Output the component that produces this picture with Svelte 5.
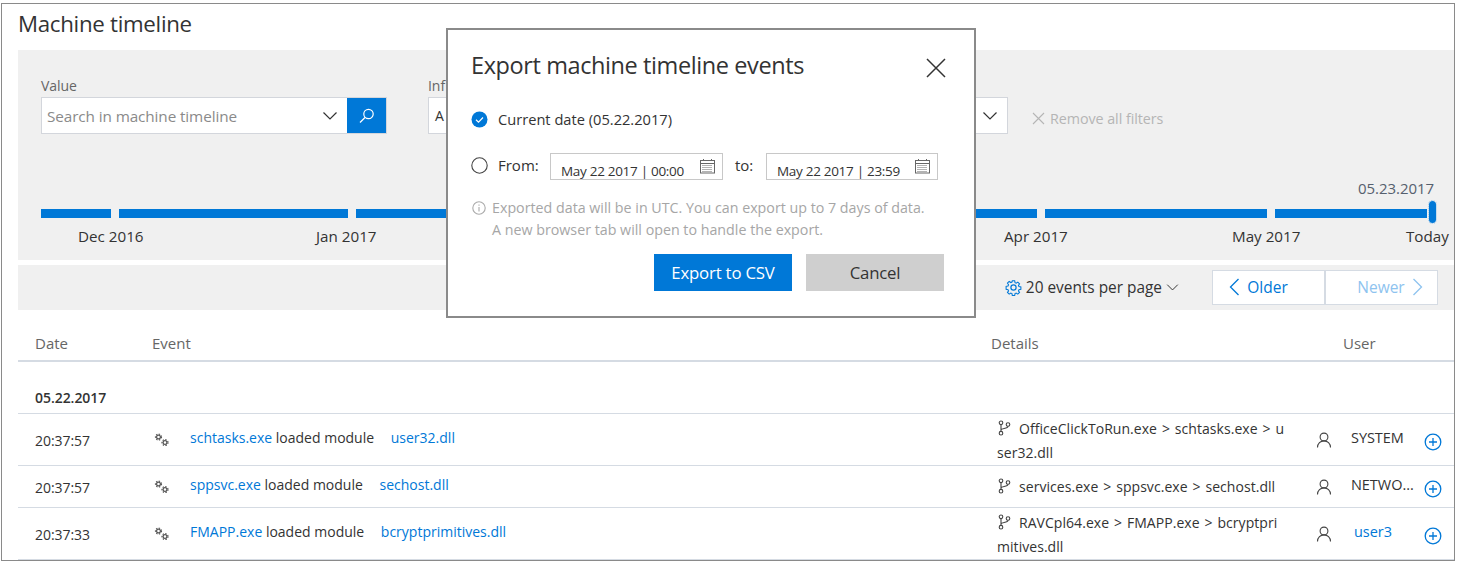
<script>
	const segments = [
		{ from: 41, to: 111 },
		{ from: 119, to: 348 },
		{ from: 356, to: 597 },
		{ from: 605, to: 820 },
		{ from: 828, to: 1037 },
		{ from: 1045, to: 1267 },
		{ from: 1275, to: 1427 }
	];

	const months = [
		{ label: 'Dec 2016', x: 60 },
		{ label: 'Jan 2017', x: 298 },
		{ label: 'Apr 2017', x: 986 },
		{ label: 'May 2017', x: 1214 },
		{ label: 'Today', x: 1388 }
	];

	const rows = [
		{
			time: '20:37:57',
			proc: 'schtasks.exe',
			mod: 'user32.dll',
			details: 'OfficeClickToRun.exe > schtasks.exe > user32.dll',
			user: 'SYSTEM',
			tall: true
		},
		{
			time: '20:37:57',
			proc: 'sppsvc.exe',
			mod: 'sechost.dll',
			details: 'services.exe > sppsvc.exe > sechost.dll',
			user: 'NETWO...',
			tall: false
		},
		{
			time: '20:37:33',
			proc: 'FMAPP.exe',
			mod: 'bcryptprimitives.dll',
			details: 'RAVCpl64.exe > FMAPP.exe > bcryptprimitives.dll',
			user: 'user3',
			link: true,
			tall: true
		}
	];
</script>

{#snippet chevron(w)}
	<svg width={w} height={w} viewBox="0 0 16 16" fill="none" stroke="currentColor" stroke-width="1.2"><path d="M1.5 4.5 8 11l6.5-6.5" /></svg>
{/snippet}

{#snippet calendar()}
	<svg class="cal" width="17" height="16" viewBox="0 0 17 16" fill="none" stroke="#666" stroke-width="1">
		<rect x="1.5" y="2.5" width="14" height="12.5" />
		<path d="M1.5 5.5h14M4.5 1v2M12.5 1v2" />
		<path d="M3.5 7.5h10M3.5 9.5h10M3.5 11.5h10M3.5 13.5h10" stroke-dasharray="1 1" />
	</svg>
{/snippet}

{#snippet smallGear(cx, cy, r)}
	<circle {cx} {cy} r={r} fill="none" stroke="#555" stroke-width="1.2" />
	<circle {cx} {cy} r={r + 1.1} fill="none" stroke="#555" stroke-width="1.2" stroke-dasharray="1.4 1.4" />
{/snippet}

<div class="frame">
	<h1>Machine timeline</h1>

	<section class="panel">
		<div class="filters">
			<div class="field">
				<span class="label">Value</span>
				<div class="search">
					<span class="placeholder">Search in machine timeline</span>
					<span class="chev">{@render chevron(16)}</span>
					<span class="go">
						<svg width="18" height="18" viewBox="0 0 18 18" fill="none" stroke="#fff" stroke-width="1.2"><circle cx="10.5" cy="7" r="4.7" /><path d="M7 10.5 2 15.5" /></svg>
					</span>
				</div>
			</div>
			<div class="field wide">
				<span class="label">Inf</span>
				<div class="select">
					<span>A</span>
					<span class="chev">{@render chevron(16)}</span>
				</div>
			</div>
			<div class="remove">
				<svg width="13" height="13" viewBox="0 0 13 13" stroke="#b5b5b5" stroke-width="1.1"><path d="M1 1l11 11M12 1 1 12" /></svg>
				Remove all filters
			</div>
		</div>

		<div class="timeline">
			<span class="current">05.23.2017</span>
			<div class="bars">
				{#each segments as s}
					<span class="seg" style="left:{s.from - 41}px;width:{s.to - s.from}px"></span>
				{/each}
				<span class="handle"></span>
			</div>
			<div class="months">
				{#each months as m}
					<span style="left:{m.x - 41 + 18}px">{m.label}</span>
				{/each}
			</div>
		</div>
	</section>

	<section class="toolbar">
		<span class="per-page">
			<svg width="17" height="17" viewBox="0 0 17 17" fill="none" stroke="#0078d7" stroke-width="1.2">
				<circle cx="8.5" cy="8.5" r="2.6" />
				<path d="M7.2 1h2.6l.4 2.1 1.3.6 1.8-1.2 1.9 1.9-1.2 1.8.6 1.3 2.1.4v2.6l-2.1.4-.6 1.3 1.2 1.8-1.9 1.9-1.8-1.2-1.3.6-.4 2.1H7.2l-.4-2.1-1.3-.6-1.8 1.2-1.9-1.9 1.2-1.8-.6-1.3-2.1-.4V7.200l2.100-.4.6-1.300-1.200-1.800 1.900-1.900 1.800 1.200 1.300-.6z" transform="translate(.85 .85) scale(.9)" />
			</svg>
			20 events per page
			<span class="mini">{@render chevron(13)}</span>
		</span>
		<div class="pager">
			<button class="older">
				<svg width="11" height="18" viewBox="0 0 11 18" fill="none" stroke="currentColor" stroke-width="1.3"><path d="M9.500 1 1.500 9l8 8" /></svg>
				Older
			</button>
			<button class="newer">
				Newer
				<svg width="11" height="18" viewBox="0 0 11 18" fill="none" stroke="currentColor" stroke-width="1.3"><path d="M1.500 1l8 8-8 8" /></svg>
			</button>
		</div>
	</section>

	<div class="table">
		<div class="head">
			<span>Date</span>
			<span>Event</span>
			<span>Details</span>
			<span class="user-head">User</span>
		</div>
		<div class="day">05.22.2017</div>
		{#each rows as r}
			<div class="row" class:tall={r.tall}>
				<span class="time">{r.time}</span>
				<span class="event">
					<svg class="gears" width="16" height="14" viewBox="0 0 16 14">
						{@render smallGear(4.500, 4, 1.900)}
						{@render smallGear(11, 9.500, 1.900)}
					</svg>
					<span class="event-text"><a href="#top">{r.proc}</a> loaded module <a class="mod" href="#top">{r.mod}</a></span>
				</span>
				<span class="details">
					<svg class="branch" width="14" height="16" viewBox="0 0 14 16" fill="none" stroke="#444" stroke-width="1.1">
						<circle cx="4" cy="2.800" r="1.800" />
						<circle cx="4" cy="13.200" r="1.800" />
						<circle cx="11" cy="4.500" r="1.800" />
						<path d="M4 4.600v6.800M4 10c0-2 7-1 7-3.700" />
					</svg>{r.details}
				</span>
				<span class="user">
					<svg class="person" width="16" height="16" viewBox="0 0 16 16" fill="none" stroke="#444" stroke-width="1.1"><circle cx="8" cy="5" r="3.900" /><path d="M1.500 15.500c0-4 3-6.600 6.500-6.600s6.500 2.600 6.500 6.600" /></svg>
					<span class="name" class:link={r.link}>{r.user}</span>
					<svg class="plus" width="18" height="18" viewBox="0 0 18 18" fill="none" stroke="#0078d7" stroke-width="1.300"><circle cx="9" cy="9" r="7.800" /><path d="M5 9h8M9 5v8" /></svg>
				</span>
			</div>
		{/each}
	</div>

	<div class="modal" role="dialog">
		<div class="modal-head">
			<h2>Export machine timeline events</h2>
			<svg width="20" height="20" viewBox="0 0 20 20" stroke="#333" stroke-width="1.500"><path d="M1 1l18 18M19 1 1 19" /></svg>
		</div>
		<div class="choice first">
			<svg width="17" height="17" viewBox="0 0 17 17"><circle cx="8.500" cy="8.500" r="8" fill="#0078d7" /><path d="M5 8.800l2.500 2.400 4.500-4.700" fill="none" stroke="#fff" stroke-width="1.200" /></svg>
			<span>Current date (05.22.2017)</span>
		</div>
		<div class="choice range">
			<svg class="radio" width="17" height="17" viewBox="0 0 17 17" fill="none" stroke="#444" stroke-width="1.100"><circle cx="8.500" cy="8.500" r="7.700" /></svg>
			<span class="from">From:</span>
			<div class="date"><span>May 22 2017 | 00:00</span>{@render calendar()}</div>
			<span class="to">to:</span>
			<div class="date"><span>May 22 2017 | 23:59</span>{@render calendar()}</div>
		</div>
		<div class="note">
			<svg width="14" height="14" viewBox="0 0 14 14" fill="none" stroke="#aaa" stroke-width="1.100"><circle cx="7" cy="7" r="6.200" /><path d="M7 3.500v1.200M7 6v4.500" /></svg>
			<p>Exported data will be in UTC. You can export up to 7 days of data.<br />A new browser tab will open to handle the export.</p>
		</div>
		<div class="actions">
			<button class="primary">Export to CSV</button>
			<button class="cancel">Cancel</button>
		</div>
	</div>
</div>

<style>
	:global(body) {
		margin: 0;
		background: #fff;
	}

	.frame {
		position: relative;
		box-sizing: border-box;
		width: 1454px;
		height: 558px;
		margin: 3px 0 0 1px;
		border: 1px solid #8a8a8a;
		overflow: hidden;
		font-family: 'Open Sans', 'Liberation Sans', sans-serif;
		font-size: 14px;
		letter-spacing: -0.05px;
		color: #333;
	}

	h1 {
		margin: 6px 0 0 16px;
		height: 40px;
		font-size: 22.300px;
		font-weight: 400;
		line-height: 28px;
		letter-spacing: -0.3px;
	}

	.panel {
		box-sizing: border-box;
		height: 210px;
		margin-left: 16px;
		padding: 26px 0 0 23px;
		background: #f0f0f0;
	}

	.filters {
		display: flex;
		gap: 41px;
	}

	.field {
		width: 346px;
	}

	.field.wide {
		width: 580px;
		margin-right: -17px;
	}

	.label {
		display: block;
		height: 21px;
		line-height: 19px;
		color: #666;
	}

	.search,
	.select {
		box-sizing: border-box;
		display: flex;
		align-items: center;
		height: 37px;
		background: #fff;
		border: 1px solid #d3d6dc;
	}

	.placeholder {
		flex: 1;
		padding-left: 5px;
		color: #8a8a8a;
		font-size: 15.300px;
		letter-spacing: -0.1px;
	}

	.select span:first-child {
		flex: 1;
		padding-left: 6px;
	}

	.chev {
		display: flex;
		margin-right: 9px;
		color: #333;
	}

	.go {
		display: flex;
		align-items: center;
		justify-content: center;
		width: 39px;
		height: 35px;
		background: #0078d7;
	}

	.remove {
		display: flex;
		align-items: center;
		gap: 5px;
		height: 37px;
		margin: 24px 0 0 0;
		color: #b5b5b5;
		font-size: 14.300px;
		align-self: flex-start;
	}

	.timeline {
		position: relative;
		height: 105px;
		margin-top: 26px;
	}

	.current {
		position: absolute;
		top: 15px;
		left: 1317px;
		color: #56606e;
		font-size: 15px;
	}

	.bars {
		position: absolute;
		top: 46px;
		left: 0;
		width: 1400px;
		height: 9px;
	}

	.seg {
		position: absolute;
		top: 0;
		height: 9px;
		background: #0078d7;
	}

	.handle {
		position: absolute;
		top: -8px;
		left: 1388px;
		width: 7px;
		height: 22px;
		border-radius: 4px;
		background: #0078d7;
		outline: 1px dotted #9cc7ea;
	}

	.months span {
		position: absolute;
		top: 63px;
		white-space: nowrap;
		font-size: 15.200px;
		letter-spacing: 0;
	}

	.toolbar {
		box-sizing: border-box;
		display: flex;
		align-items: center;
		justify-content: flex-end;
		gap: 33px;
		height: 45px;
		margin: 5px 0 0 16px;
		padding: 0 16px 0 0;
		background: #f0f0f0;
	}

	.per-page {
		display: flex;
		align-items: center;
		gap: 4px;
		margin-top: 0;
		font-size: 15.400px;
		letter-spacing: 0;
	}

	.mini {
		display: flex;
	}

	.pager {
		display: flex;
		margin-top: -1px;
	}

	.pager button {
		box-sizing: border-box;
		display: flex;
		align-items: center;
		justify-content: center;
		gap: 7px;
		width: 113px;
		height: 35px;
		padding: 0;
		background: #fff;
		border: 1px solid #d5dbe3;
		font: inherit;
		font-size: 15.500px;
		letter-spacing: 0;
	}

	.pager .older {
		padding-right: 20px;
		color: #0078d7;
	}

	.pager .newer {
		padding-left: 17px;
		color: #8ec3ef;
	}

	.table {
		margin-left: 16px;
	}

	.head {
		box-sizing: border-box;
		display: grid;
		grid-template-columns: 134px 839px 326px 1fr;
		align-items: center;
		height: 52px;
		padding-top: 15px;
		border-bottom: 2px solid #d5dbe3;
		color: #666;
		font-size: 15px;
		letter-spacing: 0;
	}

	.head span:first-child {
		padding-left: 17px;
	}

	.user-head {
		padding-left: 26px;
	}

	.day {
		box-sizing: border-box;
		height: 52px;
		padding: 26px 0 0 17px;
		line-height: 20px;
		font-weight: 600;
		border-bottom: 1px solid #d5dbe3;
	}

	.row {
		box-sizing: border-box;
		display: grid;
		grid-template-columns: 134px 839px 326px 1fr;
		align-items: center;
		min-height: 42px;
		border-bottom: 1px solid #d5dbe3;
	}

	.row.tall {
		height: 52px;
	}

	.time {
		padding: 2px 0 0 17px;
	}

	.event {
		display: flex;
		align-items: center;
	}

	.gears {
		flex: none;
		margin: 0 20px 0 2px;
	}

	.event-text {
		margin-top: -4px;
		letter-spacing: 0;
	}

	a {
		color: #0078d7;
		text-decoration: none;
	}

	.mod {
		margin-left: 13px;
	}

	.details {
		box-sizing: border-box;
		width: 297px;
		padding-left: 6px;
		line-height: 24px;
		word-break: break-all;
		letter-spacing: 0.05px;
		word-spacing: 1.200px;
	}

	.tall .details {
		margin-top: 2px;
	}

	.branch {
		margin: 0 8px 0 0;
		vertical-align: -2px;
	}

	.user {
		display: flex;
		align-items: center;
		margin-left: -1px;
	}

	.person {
		flex: none;
		margin-right: 19px;
	}

	.name {
		width: 73px;
		overflow: hidden;
		white-space: nowrap;
		margin-top: -4px;
		font-size: 14.500px;
	}

	.name.link {
		padding-left: 3px;
		width: 70px;
		color: #0078d7;
	}

	.plus {
		flex: none;
		margin-top: 4px;
	}

	.modal {
		position: absolute;
		top: 24px;
		left: 444px;
		box-sizing: border-box;
		width: 530px;
		height: 290px;
		padding: 0 30px 0 23px;
		background: #fff;
		border: 2px solid #8a8a8a;
	}

	.modal-head {
		display: flex;
		align-items: center;
		justify-content: space-between;
		box-sizing: border-box;
		height: 74px;
		margin-right: -2px;
		padding-bottom: 5px;
	}

	h2 {
		margin: 0;
		font-size: 23.500px;
		font-weight: 400;
		letter-spacing: -0.4px;
	}

	.modal-head svg {
		margin: 7px 0 0 0;
	}

	.choice {
		display: flex;
		align-items: center;
	}

	.choice.first {
		gap: 10px;
		height: 30px;
		font-size: 14.650px;
		letter-spacing: 0;
	}

	.choice.range {
		height: 27px;
		margin-top: 19px;
		font-size: 15px;
		letter-spacing: 0;
	}

	.radio {
		margin-top: -3px;
	}

	.from {
		margin: -3px 12px 0 10px;
		width: 40px;
	}

	.date {
		box-sizing: border-box;
		display: flex;
		justify-content: space-between;
		width: 173px;
		height: 27px;
		padding: 8px 6px 0 10px;
		border: 1px solid #c8c8c8;
		font-size: 13.500px;
		letter-spacing: -0.3px;
		line-height: 18px;
	}

	.date:last-child {
		width: 172px;
	}

	.to {
		width: 43px;
		padding-left: 12px;
		margin-top: -3px;
		box-sizing: border-box;
	}

	.cal {
		margin-top: -4px;
	}

	.note {
		display: flex;
		gap: 6px;
		margin-top: 17px;
		color: #a6a6a6;
		font-size: 14.250px;
		letter-spacing: 0;
	}

	.note svg {
		flex: none;
		margin: 4px 0 0 1px;
	}

	.note p {
		margin: 0;
		line-height: 22px;
	}

	.actions {
		display: flex;
		justify-content: flex-end;
		gap: 14px;
		margin-top: 13px;
	}

	.actions button {
		width: 138px;
		height: 37px;
		border: 0;
		padding: 0;
		font: inherit;
		font-size: 16.800px;
		letter-spacing: -0.2px;
	}

	.primary {
		background: #0078d7;
		color: #fff;
	}

	.cancel {
		background: #cfcfcf;
		color: #333;
	}
</style>
